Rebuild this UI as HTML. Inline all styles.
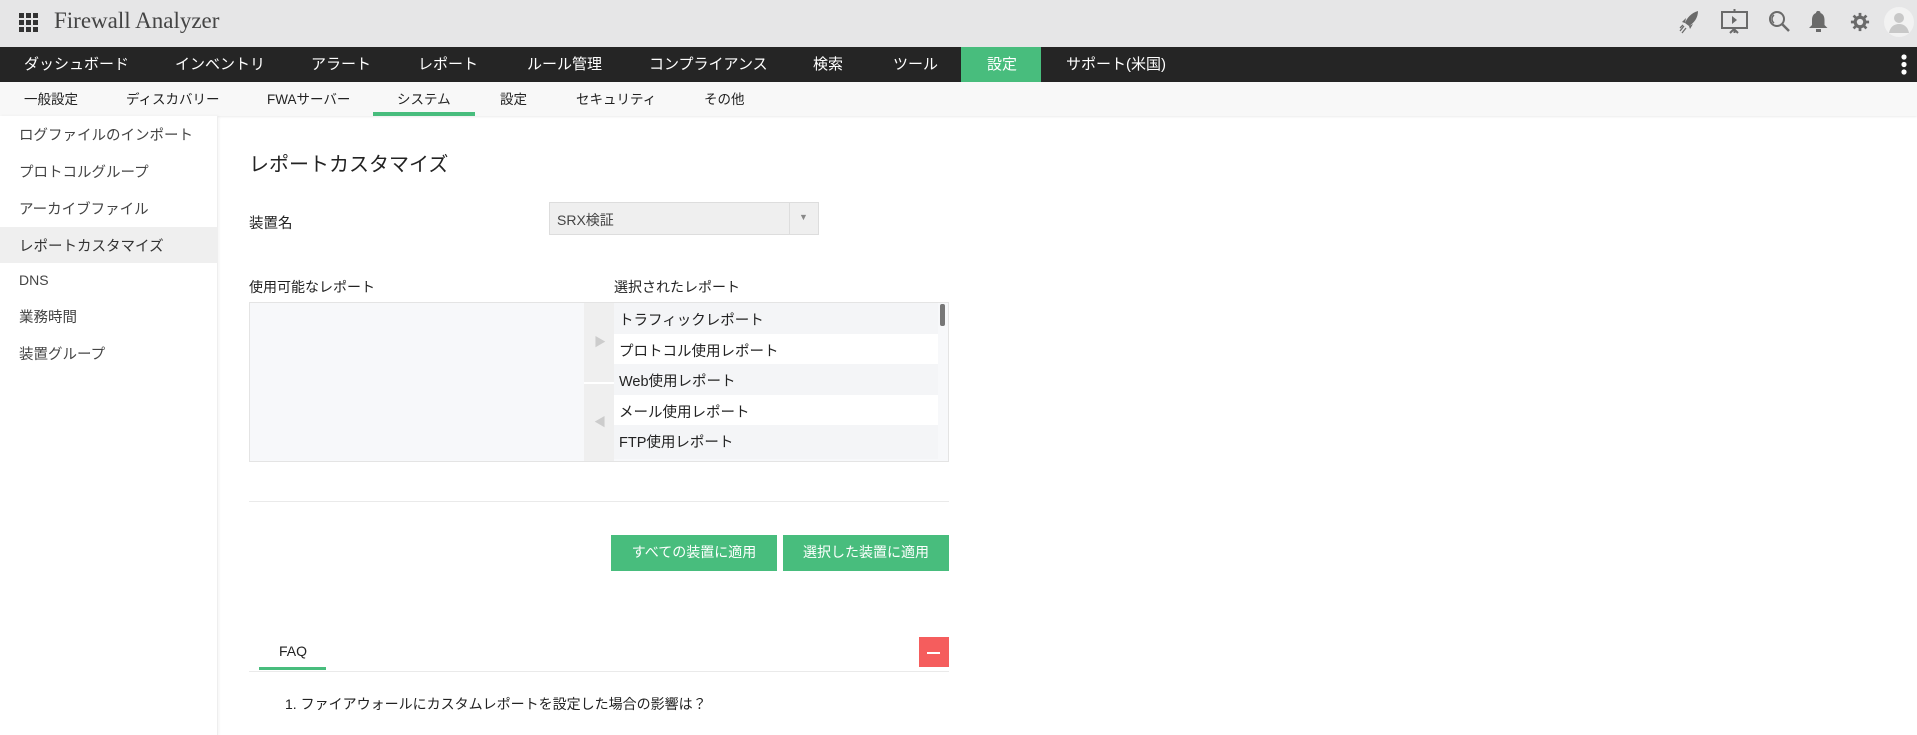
<!DOCTYPE html>
<html><head><meta charset="utf-8"><style>
*{margin:0;padding:0;box-sizing:border-box}
body{width:1917px;height:735px;overflow:hidden;background:#fff;font-family:"Liberation Sans","Noto Sans CJK JP",sans-serif;color:#333;position:relative}
.abs{position:absolute}
#hdr{left:0;top:0;width:1917px;height:47px;background:#e6e6e7}
#nav{left:0;top:47px;width:1917px;height:35px;background:#252525}
#nav span{position:absolute;top:6px;color:#fff;font-size:15px;white-space:nowrap}
#sub{left:0;top:82px;width:1917px;height:34px;background:#f8f8f8;box-shadow:0 1px 2px rgba(0,0,0,.08)}
#sub span{position:absolute;top:6px;color:#222;font-size:13.5px;white-space:nowrap}
#side{left:0;top:116px;width:218px;height:619px;background:#fff;border-right:1px solid #eee;box-shadow:1px 0 3px rgba(0,0,0,.05)}
.si{position:absolute;left:19px;font-size:14.5px;color:#444;white-space:nowrap}
.t{position:absolute;white-space:nowrap}
.row{position:absolute;left:614px;width:324px;height:30.6px;font-size:14.5px;padding:6px 5px;color:#222}
.btn{position:absolute;top:535px;height:36px;background:#48bd7d;color:#fff;font-size:14px;text-align:center;line-height:35px}
</style></head><body>
<div id="hdr" class="abs">
 <svg class="abs" style="left:19px;top:13px" width="20" height="20" viewBox="0 0 20 20" fill="#333">
  <rect x="0" y="0" width="5" height="5"/><rect x="7" y="0" width="5" height="5"/><rect x="14" y="0" width="5" height="5"/>
  <rect x="0" y="7" width="5" height="5"/><rect x="7" y="7" width="5" height="5"/><rect x="14" y="7" width="5" height="5"/>
  <rect x="0" y="14" width="5" height="5"/><rect x="7" y="14" width="5" height="5"/><rect x="14" y="14" width="5" height="5"/></svg>
 <div class="t" style="left:54px;top:8px;font-family:'Liberation Serif','DejaVu Serif',serif;font-size:23px;color:#444">Firewall Analyzer</div>
 <svg class="abs" style="left:1679px;top:10px" width="22" height="24" viewBox="0 0 22 24" fill="#6a6a6a"><path d="M19 1 C12 3 8 8 6 13 L10 16 C15 13 19 8 19 1Z M6 13 L3 12 L7 8Z M10 16 L11 19 L14 14Z"/><path d="M5 16 L1 21 M7 18 L3 23 M4 15 L1 18" stroke="#6a6a6a" stroke-width="1.3"/></svg>
 <svg class="abs" style="left:1720px;top:9px" width="29" height="25" viewBox="0 0 29 25" fill="none" stroke="#6a6a6a" stroke-width="2"><rect x="2" y="3" width="25" height="16"/><path d="M14.5 0v3M14.5 19v5M10 24l4-4 4 4"/><path d="M12 7l5 4-5 4z" fill="#6a6a6a" stroke="none"/></svg>
 <svg class="abs" style="left:1768px;top:10px" width="23" height="23" viewBox="0 0 23 23" fill="none" stroke="#6a6a6a" stroke-width="2"><circle cx="9" cy="9" r="7"/><path d="M14 14l7 7" stroke-width="2.5"/><path d="M6 5a5 5 0 0 0 0 8" stroke-width="1.5"/></svg>
 <svg class="abs" style="left:1809px;top:10px" width="19" height="23" viewBox="0 0 19 23" fill="#6a6a6a"><path d="M9.5 1a2 2 0 0 1 2 2c3 1 4 4 4 7v5l3 3H0l3-3v-5c0-3 1-6 4-7a2 2 0 0 1 2.5-2z"/><rect x="7" y="19" width="5" height="3"/></svg>
 <svg class="abs" style="left:1850px;top:12px" width="20" height="20" viewBox="0 0 22 22"><g fill="#6a6a6a"><circle cx="11" cy="11" r="7"/><rect x="9.5" y="1" width="3" height="20"/><rect x="1" y="9.5" width="20" height="3"/><rect x="9.5" y="1" width="3" height="20" transform="rotate(45 11 11)"/><rect x="9.5" y="1" width="3" height="20" transform="rotate(-45 11 11)"/></g><circle cx="11" cy="11" r="3.5" fill="#e6e6e7"/></svg>
 <svg class="abs" style="left:1884px;top:7px" width="30" height="30" viewBox="0 0 30 30"><circle cx="15" cy="15" r="15" fill="#f2f2f2"/><circle cx="15" cy="11" r="5" fill="#c8c8c8"/><path d="M5 26c1-6 5-9 10-9s9 3 10 9z" fill="#c8c8c8"/></svg>
</div>
<div id="nav" class="abs">
 <span style="left:24px">ダッシュボード</span><span style="left:175px">インベントリ</span><span style="left:311px">アラート</span><span style="left:418px">レポート</span><span style="left:527px">ルール管理</span><span style="left:649px">コンプライアンス</span><span style="left:813px">検索</span><span style="left:893px">ツール</span>
 <div class="abs" style="left:961px;top:0;width:80px;height:35px;background:#48bd7d"></div><span style="left:987px">設定</span>
 <span style="left:1066px">サポート(米国)</span>
 <svg class="abs" style="left:1900px;top:7px" width="8" height="22"><circle cx="4" cy="3" r="2.6" fill="#fff"/><circle cx="4" cy="10.5" r="2.6" fill="#fff"/><circle cx="4" cy="18" r="2.6" fill="#fff"/></svg>
</div>
<div id="sub" class="abs">
 <span style="left:24px">一般設定</span><span style="left:126px">ディスカバリー</span><span style="left:267px">FWAサーバー</span><span style="left:397px">システム</span><span style="left:500px">設定</span><span style="left:576px">セキュリティ</span><span style="left:704px">その他</span>
 <div class="abs" style="left:373px;top:30px;width:102px;height:4px;background:#48bd7d"></div>
</div>
<div id="side" class="abs">
 <div class="abs" style="left:0;top:111px;width:218px;height:36px;background:#efefef"></div>
 <div class="si" style="top:8px">ログファイルのインポート</div>
 <div class="si" style="top:45px">プロトコルグループ</div>
 <div class="si" style="top:82px">アーカイブファイル</div>
 <div class="si" style="top:119px;color:#333">レポートカスタマイズ</div>
 <div class="si" style="top:156px;font-size:14px">DNS</div>
 <div class="si" style="top:190px">業務時間</div>
 <div class="si" style="top:227px">装置グループ</div>
</div>
<div class="t" style="left:249px;top:148px;font-size:20px;color:#222">レポートカスタマイズ</div>
<div class="t" style="left:249px;top:212px;font-size:14.5px;color:#222">装置名</div>
<div class="abs" style="left:549px;top:202px;width:270px;height:33px;background:#efefef;border:1px solid #ddd"></div>
<div class="abs" style="left:789px;top:203px;width:1px;height:31px;background:#ddd"></div>
<div class="t" style="left:557px;top:210px;font-size:14px;color:#444">SRX検証</div>
<div class="t" style="left:799px;top:212px;font-size:9px;color:#888">▼</div>
<div class="t" style="left:249px;top:277px;font-size:14px;color:#222">使用可能なレポート</div>
<div class="t" style="left:614px;top:277px;font-size:14px;color:#222">選択されたレポート</div>
<div class="abs" style="left:249px;top:302px;width:700px;height:160px;background:#f7f8fa;border:1px solid #e4e4e4"></div>
<div class="abs" style="left:584px;top:303px;width:30px;height:158px;background:#efefef"></div>
<div class="abs" style="left:584px;top:382px;width:30px;height:2px;background:#fff"></div>
<div class="t" style="left:594px;top:333px;font-size:12px;color:#ccc">▶</div>
<div class="t" style="left:594px;top:413px;font-size:12px;color:#ccc">◀</div>
<div class="row" style="top:303px;background:#f4f5f7">トラフィックレポート</div>
<div class="row" style="top:333.6px;background:#fff">プロトコル使用レポート</div>
<div class="row" style="top:364.2px;background:#f4f5f7">Web使用レポート</div>
<div class="row" style="top:394.8px;background:#fff">メール使用レポート</div>
<div class="row" style="top:425.4px;background:#f4f5f7;height:34px">FTP使用レポート</div>
<div class="abs" style="left:940px;top:304px;width:5px;height:22px;background:#777;border-radius:2px"></div>
<div class="abs" style="left:249px;top:501px;width:700px;height:1px;background:#eaeaea"></div>
<div class="btn" style="left:611px;width:166px">すべての装置に適用</div>
<div class="btn" style="left:783px;width:166px">選択した装置に適用</div>
<div class="t" style="left:279px;top:643px;font-size:14px;color:#222">FAQ</div>
<div class="abs" style="left:259px;top:667px;width:67px;height:3px;background:#48bd7d"></div>
<div class="abs" style="left:249px;top:671px;width:700px;height:1px;background:#eaeaea"></div>
<div class="abs" style="left:919px;top:637px;width:30px;height:30px;background:#f55d5d"></div>
<div class="abs" style="left:927px;top:652px;width:13px;height:1.5px;background:#fff"></div>
<div class="t" style="left:285px;top:694px;font-size:14px;color:#222">1. ファイアウォールにカスタムレポートを設定した場合の影響は？</div>
</body></html>
